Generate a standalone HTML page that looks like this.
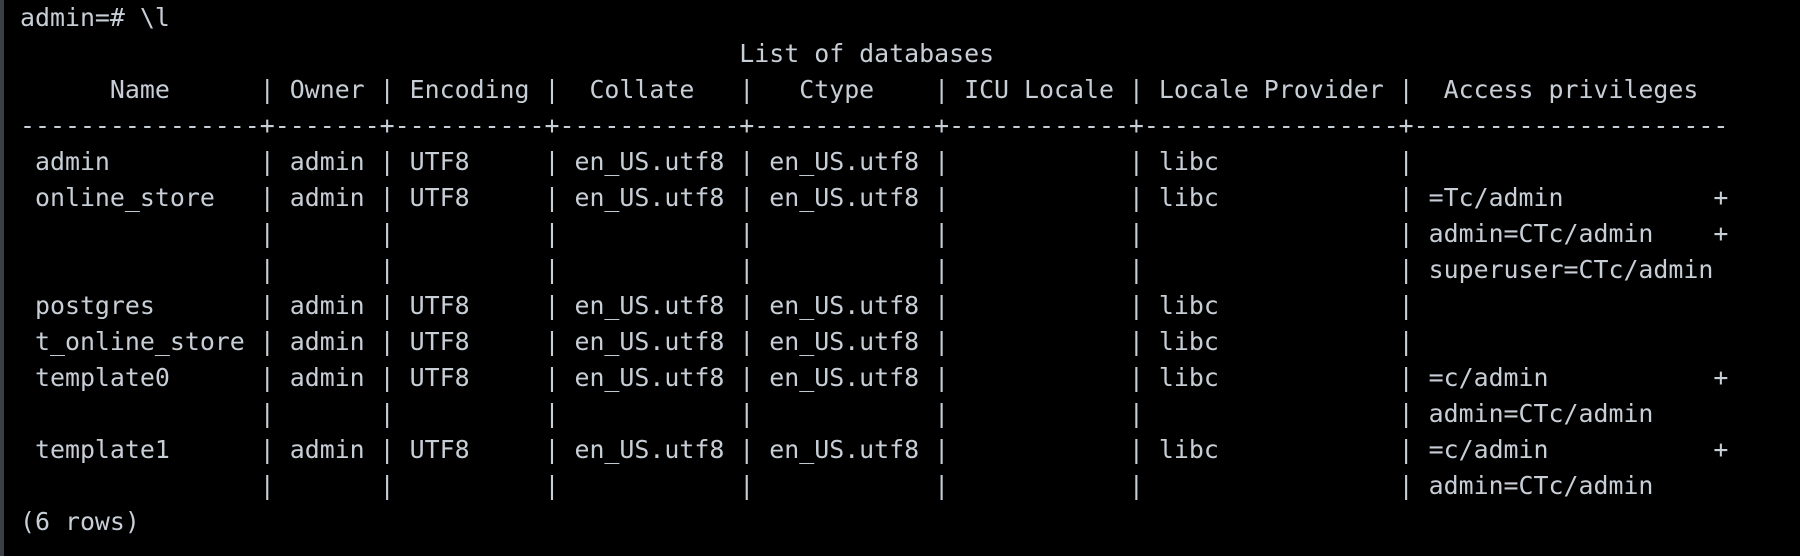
<!DOCTYPE html>
<html><head><meta charset="utf-8"><style>
html,body{margin:0;padding:0;background:#000;}
body{width:1800px;height:556px;overflow:hidden;position:relative;}
.bar{position:absolute;left:0;top:0;width:4px;height:556px;background:#3a3f45;}
pre{position:absolute;left:20px;top:0;margin:0;font-family:"DejaVu Sans Mono","Liberation Mono",monospace;font-size:24.9px;line-height:36px;color:#c7ced6;white-space:pre;}
</style></head><body>
<div class="bar"></div>
<pre>admin=# \l
                                                List of databases
      Name      | Owner | Encoding |  Collate   |   Ctype    | ICU Locale | Locale Provider |  Access privileges
----------------+-------+----------+------------+------------+------------+-----------------+---------------------
 admin          | admin | UTF8     | en_US.utf8 | en_US.utf8 |            | libc            |
 online_store   | admin | UTF8     | en_US.utf8 | en_US.utf8 |            | libc            | =Tc/admin          +
                |       |          |            |            |            |                 | admin=CTc/admin    +
                |       |          |            |            |            |                 | superuser=CTc/admin
 postgres       | admin | UTF8     | en_US.utf8 | en_US.utf8 |            | libc            |
 t_online_store | admin | UTF8     | en_US.utf8 | en_US.utf8 |            | libc            |
 template0      | admin | UTF8     | en_US.utf8 | en_US.utf8 |            | libc            | =c/admin           +
                |       |          |            |            |            |                 | admin=CTc/admin
 template1      | admin | UTF8     | en_US.utf8 | en_US.utf8 |            | libc            | =c/admin           +
                |       |          |            |            |            |                 | admin=CTc/admin
(6 rows)</pre>
</body></html>
